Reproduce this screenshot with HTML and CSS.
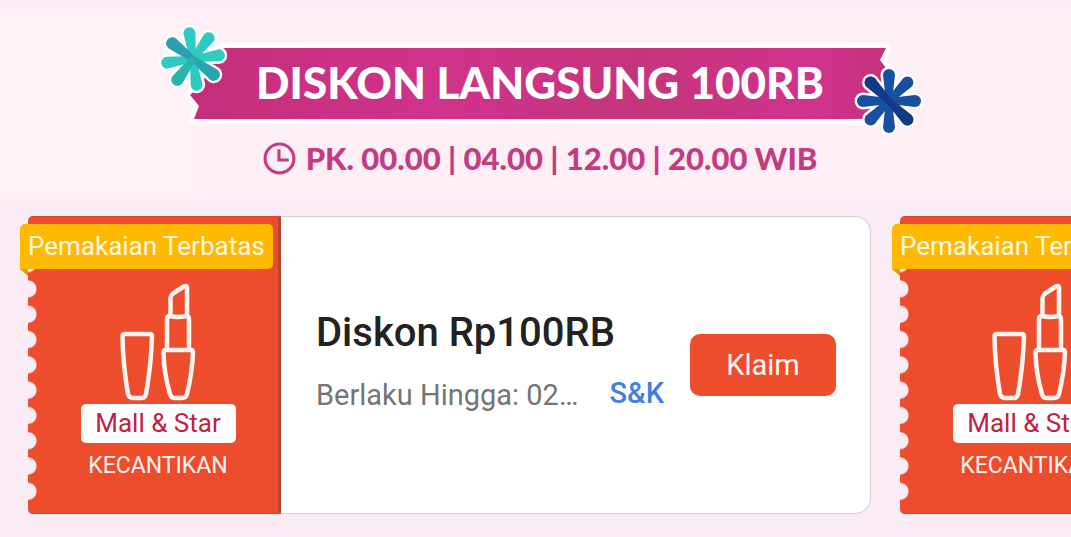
FILE: index.html
```
<!DOCTYPE html>
<html lang="id">
<head>
    <meta charset="UTF-8">
    <meta name="viewport" content="width=device-width, initial-scale=1.0">
    <title>Diskon Langsung 100RB</title>
    <link rel="stylesheet" href="styles.css">
</head>
<body>
    <!-- shared shapes -->
    <svg class="defs" width="0" height="0" aria-hidden="true">
        <defs>
            <path id="arm" d="M-3 0L-6 -26A6 6 0 0 1 6 -26L3 0Z"/>
            <g id="flower">
                <use href="#arm"/>
                <use href="#arm" transform="rotate(45)"/>
                <use href="#arm" transform="rotate(90)"/>
                <use href="#arm" transform="rotate(135)"/>
                <use href="#arm" transform="rotate(180)"/>
                <use href="#arm" transform="rotate(225)"/>
                <use href="#arm" transform="rotate(270)"/>
                <use href="#arm" transform="rotate(315)"/>
            </g>
            <symbol id="lipstick" viewBox="-3 0 100 130">
                <g fill="none" stroke="#fff5f0" stroke-width="4.5" stroke-linejoin="round">
                    <path d="M14 60H39Q41 60 41 63Q40 92 35 120Q34 124 31 124H22Q18 124 17 120Q12 92 11.500 63Q11.500 60 14 60Z"/>
                    <path d="M55 76H80Q82 76 82 79Q81 100 76 120Q75 124 71 124H63Q60 124 59 120Q53 100 52.500 79Q52.500 76 55 76Z"/>
                    <path d="M56 75V45Q56 42 59 42Q67 44 75 42Q78 42 78 45V75"/>
                    <path d="M59.500 41V24Q60 21 62 19.500L72 13Q76 10.500 76 14V41"/>
                </g>
            </symbol>
        </defs>
    </svg>

    <header class="hero">
        <div class="ribbon">
            <svg class="ribbon-art" viewBox="150 15 780 125" aria-hidden="true">
                <defs>
                    <linearGradient id="pink" x1="0" y1="0" x2="1" y2="0">
                        <stop offset="0" stop-color="#c32f7b"/>
                        <stop offset="0.35" stop-color="#d0328b"/>
                        <stop offset="0.65" stop-color="#c5357c"/>
                        <stop offset="0.9" stop-color="#d0328d"/>
                        <stop offset="1" stop-color="#c5327c"/>
                    </linearGradient>
                </defs>
                <path d="M222 48H886L880 60L886 68V119H194L199 106L190 95L200 86Z" fill="#fffafd" stroke="#fffafd" stroke-width="11" stroke-linejoin="round"/>
                <path d="M222 48H886L880 60L886 68L880 119H194L199 106L190 95L200 86Z" fill="url(#pink)"/>
                <g transform="translate(193 59) rotate(-8)">
                    <use href="#flower" fill="#fff" stroke="#fff" stroke-width="5"/>
                    <use href="#flower" fill="#2fcbc3"/>
                    <use href="#arm" transform="rotate(315)" fill="#2a9fb2"/>
                    <use href="#arm" transform="rotate(135)" fill="#27a5b0"/>
                    <use href="#arm" transform="rotate(225)" fill="#2ab5ab"/>
                </g>
                <g transform="translate(889 101)">
                    <use href="#flower" fill="#fff" stroke="#fff" stroke-width="5"/>
                    <use href="#flower" fill="#17509f"/>
                    <use href="#arm" transform="rotate(315)" fill="#123a86"/>
                    <use href="#arm" transform="rotate(135)" fill="#123a86"/>
                </g>
            </svg>
            <h1>DISKON LANGSUNG 100RB</h1>
        </div>
        <p class="hours">
            <svg class="clock" viewBox="0 0 32 32" aria-hidden="true">
                <circle cx="16" cy="16" r="14"/>
                <path d="M15.500 7V17.500H25"/>
            </svg>
            <span>PK. 00.00 | 04.00 | 12.00 | 20.00 WIB</span>
        </p>
    </header>

    <main class="vouchers">
        <article class="voucher">
            <div class="stub">
                <span class="badge">Pemakaian Terbatas</span>
                <svg class="lipstick" aria-hidden="true"><use href="#lipstick"/></svg>
                <span class="store">Mall &amp; Star</span>
                <span class="category">KECANTIKAN</span>
            </div>
            <div class="details">
                <div class="info">
                    <h2>Diskon Rp100RB</h2>
                    <div class="validity">
                        <span>Berlaku Hingga: 02…</span>
                        <a href="#">S&amp;K</a>
                    </div>
                </div>
                <button type="button">Klaim</button>
            </div>
        </article>

        <article class="voucher">
            <div class="stub">
                <span class="badge">Pemakaian Terbatas</span>
                <svg class="lipstick" aria-hidden="true"><use href="#lipstick"/></svg>
                <span class="store">Mall &amp; Star</span>
                <span class="category">KECANTIKAN</span>
            </div>
            <div class="details">
                <div class="info">
                    <h2>Diskon Rp100RB</h2>
                    <div class="validity">
                        <span>Berlaku Hingga: 02…</span>
                        <a href="#">S&amp;K</a>
                    </div>
                </div>
                <button type="button">Klaim</button>
            </div>
        </article>
    </main>
</body>
</html>
```
FILE: styles.css
```
* {
    box-sizing: border-box;
}
body {
    margin: 0;
    padding-top: 9px;
    font-family: Roboto, "Liberation Sans", sans-serif;
    background-color: #faecf4;
    color: #222;
    overflow-x: hidden;
}
h1, h2, p {
    margin: 0;
}
.defs {
    display: block;
}

/* banner */
.hero {
    display: flex;
    flex-direction: column;
    align-items: center;
    padding: 6px 0 22px 9px;
    background: linear-gradient(90deg, #fff2f6 18%, #feeef5 19%);
    font-family: Lato, "Open Sans", sans-serif;
}
.ribbon {
    display: grid;
    justify-items: center;
}
.ribbon-art,
.ribbon h1 {
    grid-area: 1 / 1;
}
.ribbon-art {
    width: 780px;
    max-width: 100%;
}
.ribbon h1 {
    padding-top: 39px;
    font-size: 44px;
    line-height: 56px;
    font-weight: 900;
    color: #fff;
    white-space: nowrap;
}
.hours {
    display: flex;
    align-items: center;
    gap: 10px;
    font-size: 31px;
    line-height: 37px;
    font-weight: 900;
    color: #c43c80;
    white-space: nowrap;
}
.clock {
    width: 33px;
    height: 33px;
    fill: none;
    stroke: #c43c80;
    stroke-width: 3;
}

/* voucher list */
.vouchers {
    display: flex;
    gap: 29px;
    padding: 17px 0 23px 28px;
    overflow: hidden;
}
.voucher {
    display: flex;
    flex: 0 0 calc(100% - 200px);
}
.stub {
    position: relative;
    display: flex;
    flex-direction: column;
    align-items: center;
    width: 253px;
    padding: 8px 0 32px 10px;
    background-color: #ee4d2d;
    border: 1px solid #c9472f;
    border-left: none;
    border-right: 3px solid #b5452f;
    border-radius: 5px 0 0 5px;
}
/* punched left edge */
.stub::before {
    content: "";
    position: absolute;
    left: 0;
    top: 34px;
    bottom: 9px;
    width: 9px;
    background: radial-gradient(circle at 0 50%, #faecf4 8px, transparent 9px) 0 0 / 9px 10%;
}
.badge {
    position: relative;
    align-self: flex-start;
    margin: -1px 0 0 -18px;
    padding: 0 8px;
    font-size: 26px;
    line-height: 45px;
    color: #fff8e0;
    white-space: nowrap;
    background-color: #ffb900;
    border-radius: 5px 5px 5px 0;
}
.badge::after {
    content: "";
    position: absolute;
    left: 0;
    top: 100%;
    border-top: 7px solid #dc9c0c;
    border-left: 8px solid transparent;
}
.lipstick {
    width: 100px;
    height: 130px;
    margin-top: 5px;
}
.store {
    width: 155px;
    margin-bottom: 8px;
    font-size: 26px;
    line-height: 39px;
    text-align: center;
    color: #c0213f;
    background-color: #fff;
    border-radius: 5px;
}
.category {
    font-size: 23px;
    line-height: 30px;
    color: #fff5f0;
}
.details {
    display: flex;
    flex: 1;
    align-items: center;
    gap: 26px;
    padding: 0 34px 0 35px;
    background-color: #fff;
    border: 1px solid #d9ccd3;
    border-left: none;
    border-radius: 0 16px 16px 0;
}
.info {
    flex: 1;
    padding-bottom: 8px;
}
.info h2 {
    margin-bottom: 20px;
    font-size: 40px;
    line-height: 48px;
    font-weight: 500;
    white-space: nowrap;
}
.validity {
    display: flex;
    justify-content: space-between;
    font-size: 29px;
    line-height: 36px;
    color: #757575;
    white-space: nowrap;
}
.validity a {
    font-weight: 500;
    line-height: 32px;
    color: #4080e0;
    text-decoration: none;
}
button {
    width: 146px;
    height: 62px;
    padding: 0;
    font-family: inherit;
    font-size: 29px;
    color: #fff5f0;
    background-color: #ee4d2d;
    border: none;
    border-radius: 10px;
    cursor: pointer;
}
```
